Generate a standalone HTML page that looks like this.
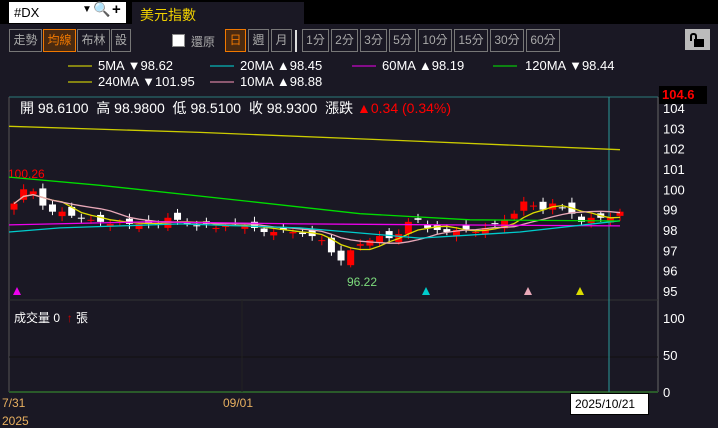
<!DOCTYPE html>
<html><head><meta charset="utf-8"><style>
*{margin:0;padding:0;box-sizing:border-box}
body{width:718px;height:425px;background:#1a1824;overflow:hidden;position:relative;font-family:"Liberation Sans","Noto Sans CJK TC",sans-serif;color:#fff}
.top{position:absolute;left:0;top:0;width:718px;height:24px;background:#000}
.inp{position:absolute;left:9px;top:2px;width:117px;height:21px;background:#fff;color:#000;font-size:13px;padding:3px 0 0 5px}
.title{position:absolute;left:132px;top:2px;width:172px;height:22px;background:#1a1824;color:#f0d000;font-size:14px;padding:3px 0 0 8px}
.b{position:absolute;top:29px;height:23px;border:1px solid #777;color:#aaa;font-size:12px;text-align:center;line-height:21px;background:#1a1824}
.b.on{border-color:#f07800;color:#f07800;background:#4a2a10}
.t{position:absolute;font-size:13px;white-space:nowrap}
svg{position:absolute;left:0;top:0}
</style></head><body>
<div class="top"></div>
<div class="inp">#DX<span style="position:absolute;left:73px;top:2px;font-size:10px">▼</span><span style="position:absolute;left:84px;top:-1px;font-size:14px">🔍</span><span style="position:absolute;left:103px;top:-1px;font-size:15px;font-weight:bold">+</span></div>
<div class="title">美元指數</div>
<div class="b" style="left:9px;width:33px">走勢</div>
<div class="b on" style="left:43px;width:33px">均線</div>
<div class="b" style="left:77px;width:33px">布林</div>
<div class="b" style="left:111px;width:20px">設</div>
<div style="position:absolute;left:172px;top:34px;width:13px;height:13px;background:#fff;border:1px solid #888"></div>
<div class="t" style="left:191px;top:33px;color:#aaa;font-size:12px">還原</div>
<div class="b on" style="left:225px;width:21px">日</div>
<div class="b" style="left:248px;width:21px">週</div>
<div class="b" style="left:271px;width:21px">月</div>
<div style="position:absolute;left:295px;top:30px;width:2px;height:22px;background:#ddd"></div>
<div class="b" style="left:302px;width:27px">1分</div>
<div class="b" style="left:331px;width:27px">2分</div>
<div class="b" style="left:360px;width:27px">3分</div>
<div class="b" style="left:389px;width:27px">5分</div>
<div class="b" style="left:418px;width:34px">10分</div>
<div class="b" style="left:454px;width:34px">15分</div>
<div class="b" style="left:490px;width:34px">30分</div>
<div class="b" style="left:526px;width:34px">60分</div>
<div style="position:absolute;left:685px;top:29px;width:25px;height:21px;background:#bbb"></div>
<div style="position:absolute;left:690px;top:33px;width:7px;height:8px;border:2px solid #000;border-bottom:none;border-radius:3px 3px 0 0"></div>
<div style="position:absolute;left:694px;top:39px;width:10px;height:8px;background:#000"></div>
<div class="t" style="left:98px;top:58px">5MA ▼98.62</div>
<div class="t" style="left:240px;top:58px">20MA ▲98.45</div>
<div class="t" style="left:382px;top:58px">60MA ▲98.19</div>
<div class="t" style="left:525px;top:58px">120MA ▼98.44</div>
<div class="t" style="left:98px;top:74px">240MA ▼101.95</div>
<div class="t" style="left:240px;top:74px">10MA ▲98.88</div>
<div class="t" style="left:20px;top:98px;font-size:14px">開 98.6100&nbsp; 高 98.9800&nbsp; 低 98.5100&nbsp; 收 98.9300&nbsp; 漲跌 <span style="color:#f00">▲0.34 (0.34%)</span></div>
<div class="t" style="left:8px;top:167px;color:#f00;font-size:12px">100.26</div>
<div class="t" style="left:347px;top:275px;color:#7ddc7d;font-size:12px">96.22</div>
<div class="t" style="left:14px;top:309px;font-size:12px">成交量 0 &nbsp;<span style="color:#c00">↑</span> 張</div>
<div class="t" style="left:2px;top:396px;color:#e8b060;font-size:12px">7/31</div>
<div class="t" style="left:2px;top:414px;color:#e8b060;font-size:12px">2025</div>
<div class="t" style="left:223px;top:396px;color:#e8b060;font-size:12px">09/01</div>
<div class="t" style="left:570px;top:393px;width:79px;height:22px;background:#fff;color:#000;font-size:12px;border:1px solid #000;padding:3px 0 0 4px">2025/10/21</div>
<div class="t" style="left:659px;top:86px;width:48px;height:18px;background:#000;color:#f00;font-weight:bold;font-size:13px;padding:1px 0 0 3px">104.6</div>
<svg id="s" width="718" height="425"></svg>
<script>
var s='';
function L(x1,y1,x2,y2,c,w){s+='<line x1="'+x1+'" y1="'+y1+'" x2="'+x2+'" y2="'+y2+'" stroke="'+c+'" stroke-width="'+(w||1)+'"/>';}
[[68,66,'#ee0'],[210,66,'#0dd'],[352,66,'#e0e'],[493,66,'#0e0'],[68,82,'#ee0'],[210,82,'#f9b']].forEach(function(a){L(a[0],a[1],a[0]+24,a[1],a[2]);});
L(9,97,658,97,'#2a7a7a');L(9,97,9,392,'#555');L(658,97,658,392,'#666');
L(9,300,658,300,'#333');L(9,357,658,357,'#111');L(9,392,658,392,'#2a5a2a',2);L(242,300,242,392,'#222');
L(609,97,609,392,'#2a9a9a');
function Y(p){return 108+(104-p)*20.33;}
[104,103,102,101,100,99,98,97,96,95].forEach(function(p){s+='<text x="663" y="'+(Y(p)+5)+'" fill="#fff" font-size="13" font-family="Liberation Sans">'+p+'</text>';});
[['100',323],['50',360],['0',397]].forEach(function(a){s+='<text x="663" y="'+a[1]+'" fill="#fff" font-size="13" font-family="Liberation Sans">'+a[0]+'</text>';});
var c=[99.3,100.0,99.9,99.2,98.9,98.9,98.7,98.6,98.5,98.4,98.3,98.4,98.3,98.3,98.3,98.3,98.6,98.5,98.3,98.2,98.3,98.1,98.2,98.3,98.2,98.1,97.9,97.9,98.0,97.9,97.8,97.7,97.5,96.9,96.5,97.0,97.3,97.5,97.7,97.6,97.8,98.4,98.5,98.1,98.0,97.9,98.0,98.0,97.9,98.1,98.3,98.5,98.8,99.4,99.2,99.0,99.3,99.1,98.8,98.4,98.6,98.6,98.6,98.9];
var n=c.length,x0=14,dx=(620-x0)/(n-1),o=[];
for(var i=0;i<n;i++){var op=i?c[i-1]+(Math.sin(i*2.3)*0.25):99.0;o.push(op);}
for(i=0;i<n;i++){var x=x0+i*dx,up=c[i]>=o[i],col=up?'#f00':'#fff';var hi=Math.max(c[i],o[i])+0.1+Math.abs(Math.sin(i*1.7))*0.15,lo=Math.min(c[i],o[i])-0.1-Math.abs(Math.cos(i*1.3))*0.15;
L(x,Y(hi),x,Y(lo),col);var t=Y(Math.max(c[i],o[i])),h=Math.max(1,Math.abs(Y(c[i])-Y(o[i])));s+='<rect x="'+(x-3.5)+'" y="'+t+'" width="7" height="'+h+'" fill="'+col+'"/>';}
function ma(k,col){var pts=[];for(var i=0;i<n;i++){var a=0,m=0;for(var j=Math.max(0,i-k+1);j<=i;j++){a+=c[j];m++;}pts.push((x0+i*dx).toFixed(1)+','+Y(a/m).toFixed(1));}s+='<polyline points="'+pts.join(' ')+'" fill="none" stroke="'+col+'" stroke-width="1.3"/>';}
ma(5,'#dd0');ma(10,'#e9a8b8');
function ln(pts,col){s+='<polyline points="'+pts.map(function(p){return p[0]+','+Y(p[1]).toFixed(1);}).join(' ')+'" fill="none" stroke="'+col+'" stroke-width="1.3"/>';}
ln([[9,98.25],[150,98.4],[300,98.3],[450,98.25],[620,98.2]],'#e0e');
ln([[9,97.9],[60,98.1],[180,98.3],[300,98.1],[420,97.6],[520,97.9],[620,98.45]],'#0cc');
ln([[9,100.6],[100,100.2],[250,99.4],[360,98.8],[470,98.5],[620,98.44]],'#0d0');
ln([[9,103.1],[200,102.8],[400,102.4],[620,101.95]],'#cc0');
function tri(x,y,col){s+='<polygon points="'+(x-4)+','+(y+4)+' '+(x+4)+','+(y+4)+' '+x+','+(y-4)+'" fill="'+col+'"/>';}
tri(17,291,'#e0e');tri(426,291,'#0cc');tri(528,291,'#e9a8b8');tri(580,291,'#dd0');
document.getElementById('s').innerHTML=s;
</script>
</body></html>
